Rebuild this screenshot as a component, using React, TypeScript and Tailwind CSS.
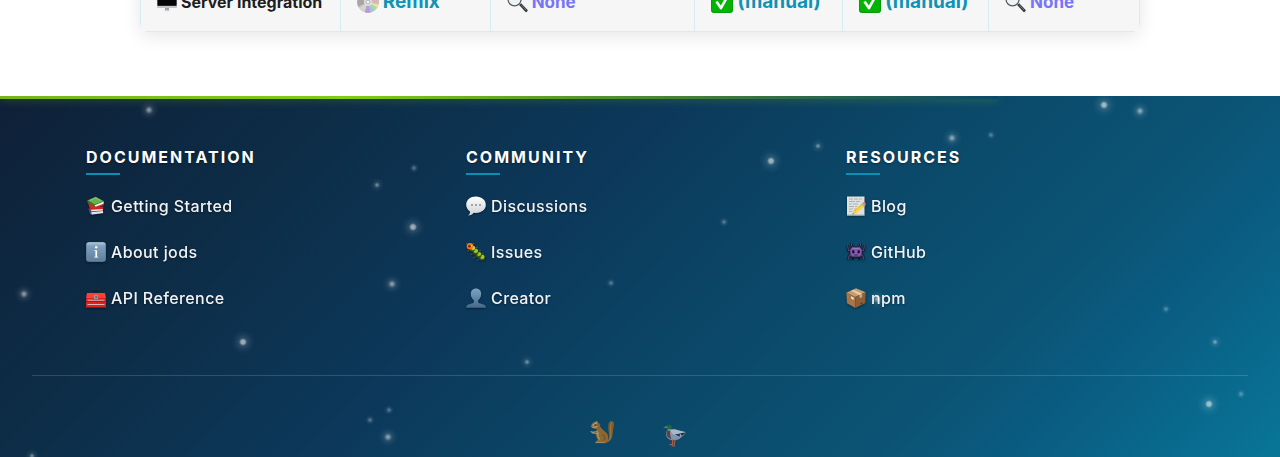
import type { ReactNode } from "react";

type IconProps = { className?: string };

function Icon({ className = "size-5", box = 20, children }: IconProps & { box?: number; children: ReactNode }) {
  return (
    <svg viewBox={`0 0 ${box} ${box}`} className={`shrink-0 ${className}`} aria-hidden="true">
      {children}
    </svg>
  );
}

function Monitor({ className }: IconProps) {
  return (
    <Icon className={className}>
      <rect x="0" y="2" width="20" height="14" rx="0.8" fill="#c4c6c9" />
      <rect x="0.6" y="2.6" width="18.8" height="11" fill="#1a1b1d" />
      <path d="M0.6 8h18.8v5.6H0.6z" fill="#060606" />
      <path d="M8 16h4v2.4H8z" fill="#a3a5a8" />
      <path d="M7.6 18.2h4.8v1H7.6z" fill="#cfd0d2" />
    </Icon>
  );
}

function Disc({ className }: IconProps) {
  return (
    <Icon className={className}>
      <circle cx="10" cy="10" r="9.8" fill="#c3c1c6" />
      <path d="M10 10 1 6.5A9.6 9.6 0 0 0 1 14z" fill="#aaa4a4" />
      <path d="M10 10 2 15.5a9.8 9.8 0 0 0 5 3.8z" fill="#d7d2cf" />
      <path d="M10 10 7 19.3a9.8 9.8 0 0 0 5.5.2z" fill="#b79ad6" />
      <path d="m10 10 2.5 9.5a9.8 9.8 0 0 0 3.4-1.7z" fill="#9fc9d6" />
      <path d="m10 10 5.9 7.8a9.8 9.8 0 0 0 2.4-2.7z" fill="#a9dd9b" />
      <path d="m10 10 8.3 5.1a9.8 9.8 0 0 0 1.2-3z" fill="#f0e3a0" />
      <path d="m10 10 9.5 2.1a9.8 9.8 0 0 0 0-4.3z" fill="#dcb5b5" />
      <path d="m10 10-5-8.4A9.7 9.7 0 0 1 11 .3z" fill="#e4e2e4" />
      <circle cx="10" cy="10" r="3.6" fill="#dedde0" />
      <circle cx="10" cy="10" r="1.7" fill="#f7f7f7" stroke="#99979b" strokeWidth="0.6" />
    </Icon>
  );
}

function Magnifier({ className }: IconProps) {
  return (
    <Icon className={className}>
      <path d="m11.5 12.5 2-1.8 6.2 6.4c.5.6-1.3 2.500-2 2z" fill="#33363d" />
      <path d="m13.300 12 5 5.300" stroke="#7b7f88" strokeWidth="0.9" />
      <circle cx="7.200" cy="7" r="6.200" fill="#eef3f6" stroke="#55585d" strokeWidth="1.2" />
      <path d="M3.500 5.500A4.500 4.500 0 0 1 7 2.800" stroke="#fff" strokeWidth="1.2" fill="none" />
    </Icon>
  );
}

function CheckBox({ className }: IconProps) {
  return (
    <Icon className={className}>
      <rect width="20" height="20" rx="3.500" fill="#04b404" />
      <rect x="0.500" y="0.500" width="19" height="19" rx="3" fill="none" stroke="#0a9d0a" />
      <path d="m5 9.500 4 6L15.500 4" fill="none" stroke="#fff" strokeWidth="2.400" strokeLinejoin="round" />
    </Icon>
  );
}

function Books() {
  return (
    <Icon>
      <path d="m2.300 12.500 2 6.300 12.600-1.200.3-1.300-1-3z" fill="#4a4a86" />
      <path d="m5 16.300 11.800-1.400.4 2.200-11.300 1.400z" fill="#e2e4e8" />
      <path d="m2.800 9.500 2 5.800 12.200-.700.400-3.900z" fill="#cf2222" />
      <path d="m5 13.800 11.800-.700v1.400l-11.400.7z" fill="#eceef0" />
      <path d="m1.500 6.300 2.700 5.500 4 .900L18 9.300l-.4-2z" fill="#d52626" />
      <path d="M1.300 4.500 9.700.700 18 5.200 8.800 8.500z" fill="#67b04d" />
      <path d="m1.300 4.500 7.500 4L18 5.200v1L8.500 10.400 1.200 6z" fill="#2c7a2d" />
      <path d="m8.600 9.300 9.200-3.700-.3 2.200-8 3z" fill="#f1f2ed" />
      <path d="m4 4.500 5.800-2.500 4.500 2.600" stroke="#92cb7b" strokeWidth="0.800" fill="none" />
    </Icon>
  );
}

function Info() {
  return (
    <Icon>
      <defs>
        <linearGradient id="info-face" x1="0" y1="0" x2="0" y2="1">
          <stop offset="0" stopColor="#b4c9dc" />
          <stop offset="0.2" stopColor="#7e9fbd" />
          <stop offset="1" stopColor="#5f7f9c" />
        </linearGradient>
      </defs>
      <rect width="20" height="20" rx="3" fill="#52708b" />
      <rect x="0.500" y="0.300" width="19" height="19" rx="2.800" fill="url(#info-face)" />
      <circle cx="10.200" cy="5.300" r="1.200" fill="#fff" />
      <path d="M8.400 8.200h2.700v6.600h1.200v.8H8.200v-.8h1.200V9H8.400z" fill="#fff" />
    </Icon>
  );
}

function Toolbox() {
  return (
    <Icon>
      <path d="M5.800 5V2.500q.2-1.200 1.500-1.200h5.400q1.300 0 1.500 1.200V5" fill="none" stroke="#262a30" strokeWidth="1.200" />
      <path d="m1 5 18-.1 1 6.500v8H0v-8z" fill="#d92320" />
      <path d="M1 5h18l.7 5H.3z" fill="#fb4037" />
      <path d="M1.500 12.200h17M1.500 16.500h17" stroke="#d9c6c7" strokeWidth="0.900" />
      <path d="M0 13.500h20" stroke="#7d1616" strokeWidth="0.600" />
      <rect x="8" y="7" width="4" height="4" rx="0.500" fill="#98a0a5" />
      <path d="M9 8.300h2v1.500H9" fill="none" stroke="#53595e" strokeWidth="0.700" />
    </Icon>
  );
}

function Bubble() {
  return (
    <Icon>
      <defs>
        <linearGradient id="bubble-face" x1="0" y1="0" x2="0" y2="1">
          <stop offset="0" stopColor="#fff" />
          <stop offset="1" stopColor="#ccd0d5" />
        </linearGradient>
      </defs>
      <path
        d="M10 .500C4.300.500.200 4 .200 8.800c0 2.900 1.500 5.200 3.800 6.600.2 1.600-.6 3-2 4 2.600 0 4.500-1 5.600-2.700l2.400.2c5.700 0 9.800-3.400 9.800-8.100S15.700.500 10 .500z"
        fill="url(#bubble-face)"
      />
      <circle cx="6" cy="9" r="0.800" fill="#4b4e52" />
      <circle cx="10" cy="9" r="0.800" fill="#4b4e52" />
      <circle cx="14" cy="9" r="0.800" fill="#4b4e52" />
    </Icon>
  );
}

function Caterpillar() {
  return (
    <Icon>
      <path d="M1 2.500.300.800M6.500 2.500 8 1M3 8 1.800 9.500M6 11.500 4.500 13M9 14.500 7.500 16.300M12.500 17 11 18.500M10 6l1.800-1M13 9l1.800-1M16 12l1.500-.8" stroke="#7e6630" strokeWidth="0.800" />
      <circle cx="16" cy="15.500" r="3" fill="#3a5c10" />
      <circle cx="16.300" cy="14.900" r="2.100" fill="#a5c92c" />
      <circle cx="12.700" cy="12.800" r="3.100" fill="#34540f" />
      <circle cx="13" cy="12" r="2.100" fill="#99c328" />
      <circle cx="9.500" cy="9.800" r="3.100" fill="#2f4f0f" />
      <circle cx="9.900" cy="8.900" r="2.100" fill="#a2cb2c" />
      <circle cx="6.600" cy="6.500" r="2.900" fill="#446a13" />
      <circle cx="7.200" cy="6" r="2" fill="#cdd435" />
      <circle cx="4" cy="4.300" r="3.300" fill="#ef7e19" />
      <circle cx="3.400" cy="4.200" r="1.300" fill="#7b2409" />
      <circle cx="5.700" cy="3.700" r="0.700" fill="#ffe05b" />
    </Icon>
  );
}

function Person() {
  return (
    <Icon>
      <defs>
        <linearGradient id="person-face" x1="0" y1="0" x2="0" y2="1">
          <stop offset="0" stopColor="#7ba2c4" />
          <stop offset="1" stopColor="#46698b" />
        </linearGradient>
      </defs>
      <path
        d="M10 .500c-3.200 0-5.200 2.200-5.200 5.600 0 2.600 1.200 4.900 3 6.200v2c-.6 1.500-5.600 1.500-7 3.400-.5.700-.7 1.300-.7 2h19.800c0-.7-.2-1.400-.7-2-1.400-1.900-6.400-1.900-7-3.400v-2c1.800-1.300 3-3.600 3-6.200C15.200 2.700 13.200.500 10 .500z"
        fill="url(#person-face)"
      />
    </Icon>
  );
}

function Memo() {
  return (
    <Icon>
      <path d="M1 .500h17.500v19H1z" fill="#dfe1df" />
      <path d="M1 18.500h17.500v1H1z" fill="#aab0b0" />
      <path d="M3 3h4m1 0h4m1 0h3M3 5.500h6m1 0h4M3 8h3m1 0h5M3 10.500h5m1 0h2M3 13h4m1 0h2M3 15.500h3" stroke="#9fa3a4" strokeWidth="0.800" />
      <path d="m7 18 .8-3.300L16 7.400l2.600 2.700-8.200 6.800z" fill="#f4be21" />
      <path d="m8.800 15.700 8.200-7 .9.900-7 6.800z" fill="#ffdb4d" />
      <path d="m15.300 8 1.500-1.500 2.700 2.700L18 10.600z" fill="#a7afb4" />
      <path d="M16.800 6.500q1.500-1 2.600.2 1 1.200.1 2.500z" fill="#ee6c77" />
      <path d="m6.500 18.600 1-3.600 2.500 2.200z" fill="#e8c99b" />
      <path d="m6.500 18.600.4-1.400.9.800z" fill="#222" />
    </Icon>
  );
}

function Alien() {
  return (
    <Icon>
      <path d="M5.500 1.500v2L7.500 6M14.500 1.500v2L12.500 6M5.500 9 2.500 8.500 1.500 3.500M14.500 9l3-.500 1-5M6 12.500 3 13.500 2.500 17.500M14 12.500l3 1 .5 4M7.500 14 6.500 17.500M12.500 14l1 3.500" stroke="#1c1424" strokeWidth="2.200" fill="none" />
      <path d="M6 5h8l2 2.500v5.300L13.500 15h-7L4 12.800V7.500z" fill="#825bb0" stroke="#1c1424" strokeWidth="0.800" />
      <path d="M5.500 1.500v2L7.500 6M14.500 1.500v2L12.500 6M5.500 9 2.500 8.500 1.500 3.500M14.500 9l3-.500 1-5M6 12.500 3 13.500 2.500 17.500M14 12.500l3 1 .5 4" stroke="#7a60a0" strokeWidth="0.700" fill="none" />
      <path d="M6.300 8.300h2v2.900h-2zm5.400 0h2v2.900h-2z" fill="#120a1a" />
      <path d="M6.500 6.300h7" stroke="#a580d0" strokeWidth="0.900" />
      <path d="M8 13h4" stroke="#3b2456" strokeWidth="0.900" />
    </Icon>
  );
}

function Package() {
  return (
    <Icon>
      <path d="m10 .300 9.700 3.900L9.300 9 .300 4.700z" fill="#cb9b6d" />
      <path d="m.300 4.700 9 4.300V20L1 15.300z" fill="#a87545" />
      <path d="M9.300 9l10.400-4.800-.5 10.800-9.900 5z" fill="#8f6037" />
      <path d="m5.200 2.700 2-.9 9 4-2.700 1.400z" fill="#e5cdae" />
      <path d="m13.500 7.200 2.700-1.300v3l-2.500 1.300z" fill="#c9aa82" />
      <path d="m5 8.200 2.600 1.200v2.500L5.300 10.700z" fill="#e8e4df" />
      <path d="m14.500 15.200 2-1v1.300l-2 1z" fill="#4d3422" />
    </Icon>
  );
}

function Squirrel() {
  return (
    <Icon className="size-7 opacity-85" box={28}>
      <path d="M14 21.500c4.500 1 6.500-1 6-6-.4-6-2-13.500 2-14.500 3.500-.5 3.300 3.500 2.300 8-.9 4.500 0 13-7.300 13.500z" fill="#99611f" />
      <path d="M18 21c4-1 4-5 3.700-9-.4-4-.2-7.500 1-9" stroke="#c08534" strokeWidth="0.900" fill="none" />
      <path d="M8 9c-2 3-1.500 8 1 10.500L6 22.500h12c2.500-3 1.500-8-1-10-2-1.500-4-3.500-5.500-5.500z" fill="#a66d25" />
      <path d="M9 12c-.8 3 0 5.500 1.500 7.500" stroke="#c9a264" strokeWidth="1.300" fill="none" />
      <path d="M13 15c3-.5 4 3.500 1.500 5.500" stroke="#704718" strokeWidth="0.900" fill="none" />
      <path d="M1.500 6.800C2.500 4 4 2 6.500 1.600L7.500.600 9 2.200c2.500 1.500 3 5 1 6.300-2 1-5 1-8.500-1.700z" fill="#9a6a32" />
      <path d="m3.500 5.500 4.500-3M3.500 7.200l5-.5" stroke="#dec99c" strokeWidth="1.100" />
      <circle cx="6" cy="5" r="0.700" fill="#171311" />
      <path d="M9 11c-3 1.500-5 1.300-7.500.5M9.500 13c-3 1.200-5 .2-7-.5" stroke="#b0a18b" strokeWidth="1.200" fill="none" />
      <path d="M6.500 22.500h10" stroke="#b59262" strokeWidth="1.200" />
    </Icon>
  );
}

function Duck() {
  return (
    <Icon className="size-7 opacity-85" box={28}>
      <path d="M3.500 11c-1.500 4 .5 7.500 4 8.700 4 1.300 8.500.3 10.500-2.200l3-2.500 2-3-4-.5-8-2.500z" fill="#9aa2b1" />
      <path d="M7 10c5-1.500 9 .5 15.500 2.300L18 15.500c-5 1-9-.5-11-5.500z" fill="#c6ccd6" />
      <path d="M4 10.300 7.500 10c-1 3-.5 6 1 9-4.500-1-6-4.500-4.500-8.700z" fill="#6e3d3f" />
      <path d="m11.500 14.500 6-1-1 3z" fill="#183078" />
      <path d="m17 13.500 6-1.200-4 3.400z" fill="#1c2834" />
      <path d="M3.500 6.500C4 4.500 8.500 4.300 8.700 7L8 10H4.700z" fill="#147b42" />
      <path d="m0 7.300 4.200-1v1.800z" fill="#bca32e" />
      <path d="M4.500 10h3.700" stroke="#dce2e5" strokeWidth="0.800" />
      <circle cx="5.200" cy="6.600" r="0.400" fill="#07130b" />
      <path d="M9.500 19.500v4.500M12 19.500l-1 6.500M6.500 24.500H10M8.500 26h3.500" stroke="#b9684a" strokeWidth="1.200" />
    </Icon>
  );
}

const columns = [
  {
    title: "Documentation",
    links: [
      { icon: <Books />, label: "Getting Started" },
      { icon: <Info />, label: "About jods" },
      { icon: <Toolbox />, label: "API Reference" },
    ],
  },
  {
    title: "Community",
    links: [
      { icon: <Bubble />, label: "Discussions" },
      { icon: <Caterpillar />, label: "Issues" },
      { icon: <Person />, label: "Creator" },
    ],
  },
  {
    title: "Resources",
    links: [
      { icon: <Memo />, label: "Blog" },
      { icon: <Alien />, label: "GitHub" },
      { icon: <Package />, label: "npm" },
    ],
  },
];

const starSizes = {
  lg: "size-8 bg-[radial-gradient(circle,rgba(255,255,255,0.62)_0,rgba(255,255,255,0.55)_2px,rgba(255,255,255,0.12)_4px,rgba(255,255,255,0.04)_8px,transparent_12px)]",
  md: "size-6 bg-[radial-gradient(circle,rgba(255,255,255,0.6)_0,rgba(255,255,255,0.48)_1px,rgba(255,255,255,0.1)_4px,rgba(255,255,255,0.03)_7px,transparent_10px)]",
  sm: "size-5 bg-[radial-gradient(circle,rgba(255,255,255,0.48)_0,rgba(255,255,255,0.35)_1px,rgba(255,255,255,0.07)_3px,transparent_7px)]",
  xs: "size-4 bg-[radial-gradient(circle,rgba(255,255,255,0.36)_0,rgba(255,255,255,0.25)_1px,rgba(255,255,255,0.05)_3px,transparent_5px)]",
};

// Horizontal place is a share of the sky's width (out of 1280), vertical is pixels below its top edge.
const stars: [number, number, keyof typeof starSizes][] = [
  [149, 14, "md"], [377, 89, "sm"], [414, 72, "xs"], [413, 131, "lg"], [392, 188, "md"],
  [24, 198, "md"], [243, 246, "lg"], [527, 266, "sm"], [389, 314, "xs"], [370, 324, "xs"],
  [388, 341, "md"], [32, 360, "sm"], [771, 65, "lg"], [818, 50, "sm"], [724, 126, "xs"],
  [611, 187, "xs"], [1104, 9, "lg"], [1140, 15, "md"], [952, 42, "md"], [991, 39, "xs"],
  [1166, 213, "xs"], [1215, 246, "sm"], [1241, 298, "xs"], [1209, 308, "lg"], [877, 203, "md"],
];

const cell = "border border-[#d5edf2] px-4 py-4";

function Supported() {
  return (
    <span className="flex items-center gap-1 text-[19px]/[26px] text-[#0e93b5]">
      <CheckBox className="size-[22px]" />
      (manual)
    </span>
  );
}

function Unsupported() {
  return (
    <span className="flex items-center gap-1 text-[17px]/[26px] text-[#7775f6]">
      <Magnifier className="size-[21px]" />
      None
    </span>
  );
}

export default function App() {
  return (
    <div className="flex min-h-screen flex-col bg-white font-['Inter',sans-serif]">
      <main className="px-8 pb-16">
        <div className="mx-auto -mt-[28px] max-w-[1000px] overflow-hidden rounded-lg shadow-[0_4px_18px_rgba(0,0,0,0.1)]">
          <table className="w-full table-fixed border-collapse bg-[#f6f6f6] text-left font-bold">
            <colgroup>
              <col className="w-[20%]" />
              <col className="w-[15%]" />
              <col className="w-[20.5%]" />
              <col className="w-[14.8%]" />
              <col className="w-[14.6%]" />
              <col className="w-[15.1%]" />
            </colgroup>
            <tbody>
              <tr>
                <th scope="row" className={cell}>
                  <span className="flex items-center gap-1 whitespace-nowrap text-base/[26px] text-[#1c1e21]">
                    <Monitor className="size-5" />
                    Server Integration
                  </span>
                </th>
                <td className={cell}>
                  <span className="flex items-center gap-1 text-[19px]/[26px] text-[#0e93b5]">
                    <Disc className="size-[22px]" />
                    Remix
                  </span>
                </td>
                <td className={cell}><Unsupported /></td>
                <td className={cell}><Supported /></td>
                <td className={cell}><Supported /></td>
                <td className={cell}><Unsupported /></td>
              </tr>
            </tbody>
          </table>
        </div>
      </main>

      <footer className="relative flex-1 overflow-hidden bg-[linear-gradient(135deg,#0f2038_0%,#0d2c46_20%,#0c385a_41%,#0b4667_56%,#0b5475_76%,#0a5c82_84%,#087698_100%)] px-8 pt-12">
        <div className="absolute top-0 left-0 h-[3px] w-[78%] bg-linear-to-r from-[#76b41b] via-[#80cc16] via-35% to-transparent shadow-[0_0_10px_rgba(132,204,22,0.5)]" />

        <nav aria-label="Footer" className="mx-auto grid max-w-[1140px] grid-cols-3">
          {columns.map((column) => (
            <section key={column.title} className="px-4">
              <h3 className="text-base/[26px] font-bold tracking-[2px] text-white uppercase text-shadow-[0_1px_2px_rgba(0,0,0,0.4)] after:mt-[3px] after:block after:h-0.5 after:w-[34px] after:bg-[#0891b2]">
                {column.title}
              </h3>
              <ul className="mt-4 flex flex-col gap-4">
                {column.links.map((link) => (
                  <li key={link.label}>
                    <a
                      href="#"
                      className="inline-flex h-[30px] items-center gap-[5px] align-top text-base font-medium tracking-wide text-[#f0f2f4] drop-shadow-[0_1px_1px_rgba(0,0,0,0.4)]"
                    >
                      {link.icon}
                      {link.label}
                    </a>
                  </li>
                ))}
              </ul>
            </section>
          ))}
        </nav>

        <div className="mt-[62px] flex justify-center gap-[46px] border-t border-white/15 pt-11 pb-2">
          <Squirrel />
          <Duck />
        </div>

        {stars.map(([x, y, size]) => (
          <span
            key={`${x}-${y}`}
            className={`pointer-events-none absolute -translate-x-1/2 -translate-y-1/2 ${starSizes[size]}`}
            style={{ left: `${(x / 1280) * 100}%`, top: y }}
          />
        ))}
      </footer>
    </div>
  );
}
